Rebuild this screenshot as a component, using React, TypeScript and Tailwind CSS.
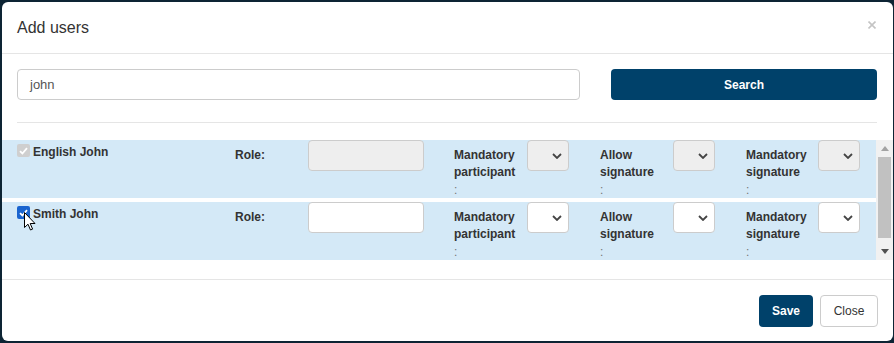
import React from "react";

type User = { name: string; disabled: boolean };

const users: User[] = [
    { name: "English John", disabled: true },
    { name: "Smith John", disabled: false },
];

function Check({ disabled }: { disabled: boolean }) {
    return (
        <div
            className={`w-[13px] h-[13px] rounded-[2px] flex items-center justify-center shrink-0 ${
                disabled ? "bg-[#cfcfcf]" : "bg-[#1a64cf]"
            }`}
        >
            <svg width="9" height="8" viewBox="0 0 9 8">
                <path d="M1 4.2 L3.4 6.5 L8 1.2" fill="none" stroke="#ffffff" strokeWidth="1.8" />
            </svg>
        </div>
    );
}

function Select({ disabled }: { disabled: boolean }) {
    return (
        <div
            className={`w-[42px] h-[31px] rounded-[4px] border border-[#cccccc] flex items-center justify-end pr-[6px] shrink-0 ${
                disabled ? "bg-[#eeeeee]" : "bg-white"
            }`}
        >
            <svg width="10" height="6" viewBox="0 0 10 6">
                <path d="M1 1 L5 5 L9 1" fill="none" stroke="#444444" strokeWidth="1.8" />
            </svg>
        </div>
    );
}

function Label({ lines, width }: { lines: string[]; width: string }) {
    return (
        <div className={`${width} shrink-0 pt-[7px] text-[12px] font-bold leading-[17px] text-[#333333]`}>
            {lines.map((l) => (
                <div key={l}>{l}</div>
            ))}
            <div className="mt-[1px] font-normal text-[#777777]">:</div>
        </div>
    );
}

function UserRow({ user }: { user: User }) {
    return (
        <div className="h-[58px] bg-[#d4e9f7] flex pl-[15px]">
            <div className="w-[218px] shrink-0 flex items-start gap-[3px] pt-[4px]">
                <Check disabled={user.disabled} />
                <span className="text-[12px] font-bold leading-[17px] text-[#333333]">{user.name}</span>
            </div>
            <div className="w-[73px] shrink-0 pt-[7px] text-[12px] font-bold leading-[17px] text-[#333333]">Role:</div>
            <div
                className={`w-[116px] h-[31px] rounded-[4px] border border-[#cccccc] shrink-0 ${
                    user.disabled ? "bg-[#eeeeee]" : "bg-white"
                }`}
            />
            <div className="w-[30px] shrink-0" />
            <Label lines={["Mandatory", "participant"]} width="w-[73px]" />
            <Select disabled={user.disabled} />
            <div className="w-[31px] shrink-0" />
            <Label lines={["Allow", "signature"]} width="w-[73px]" />
            <Select disabled={user.disabled} />
            <div className="w-[31px] shrink-0" />
            <Label lines={["Mandatory", "signature"]} width="w-[72px]" />
            <Select disabled={user.disabled} />
        </div>
    );
}

export default function App() {
    return (
        <div
            className="w-[894px] h-[343px] bg-[#0d2434] pt-[2px] pl-[2px]"
            style={{ fontFamily: '"Liberation Sans", Arial, sans-serif' }}
        >
            <div className="relative w-[891px] h-[339px] bg-white rounded-[6px] overflow-hidden flex flex-col">
                {/* header */}
                <div className="h-[52px] border-b border-[#e5e5e5] flex items-center justify-between pl-[15px] pr-[17px] shrink-0">
                    <h4 className="text-[16px] leading-[22px] text-[#333333]">Add users</h4>
                    <svg width="8" height="8" viewBox="0 0 8 8" className="mb-[6px]">
                        <path d="M0.5 0.5 L7.5 7.5 M7.5 0.5 L0.5 7.5" stroke="#c4c4c4" strokeWidth="1.6" />
                    </svg>
                </div>

                {/* search */}
                <div className="pt-[15px] pl-[15px] pr-[16px] shrink-0">
                    <div className="flex gap-[31px]">
                        <div className="w-[563px] h-[31px] rounded-[4px] border border-[#cccccc] flex items-center pl-[12px] text-[13px] text-[#555555]">
                            john
                        </div>
                        <button className="w-[266px] h-[31px] rounded-[4px] bg-[#00416a] text-white text-[12px] font-bold">
                            Search
                        </button>
                    </div>
                    <div className="mt-[22px] h-px bg-[#e5e5e5]" />
                </div>

                {/* list */}
                <div className="mt-[17px] h-[120px] flex shrink-0">
                    <div className="w-[874px] flex flex-col gap-[4px] overflow-hidden">
                        {users.map((u) => (
                            <UserRow key={u.name} user={u} />
                        ))}
                    </div>
                    <div className="w-[17px] bg-[#f1f1f1] flex flex-col items-center">
                        <div className="h-[17px] flex items-center justify-center">
                            <svg width="8" height="5" viewBox="0 0 8 5">
                                <path d="M0 5 L4 0 L8 5 Z" fill="#a3a3a3" />
                            </svg>
                        </div>
                        <div className="w-[13px] h-[81px] bg-[#c1c1c1]" />
                        <div className="flex-1" />
                        <div className="h-[17px] flex items-center justify-center">
                            <svg width="8" height="5" viewBox="0 0 8 5">
                                <path d="M0 0 L8 0 L4 5 Z" fill="#505050" />
                            </svg>
                        </div>
                    </div>
                </div>

                {/* footer */}
                <div className="mt-[19px] border-t border-[#e5e5e5] flex justify-end gap-[7px] pt-[15px] pr-[15px]">
                    <button className="w-[54px] h-[32px] rounded-[4px] bg-[#00416a] text-white text-[12px] font-bold">
                        Save
                    </button>
                    <button className="w-[58px] h-[32px] rounded-[4px] border border-[#cccccc] bg-white text-[#333333] text-[12px]">
                        Close
                    </button>
                </div>

                {/* mouse cursor */}
                <svg width="12" height="19" viewBox="0 0 12 19" className="absolute left-[22px] top-[210px]">
                    <path
                        d="M0.5 0.5 L0.5 15.5 L4 12.2 L6.5 18 L8.6 17.1 L6.2 11.5 L11 11.5 Z"
                        fill="#ffffff"
                        stroke="#000000"
                        strokeWidth="1"
                        strokeLinejoin="round"
                    />
                </svg>
            </div>
        </div>
    );
}
